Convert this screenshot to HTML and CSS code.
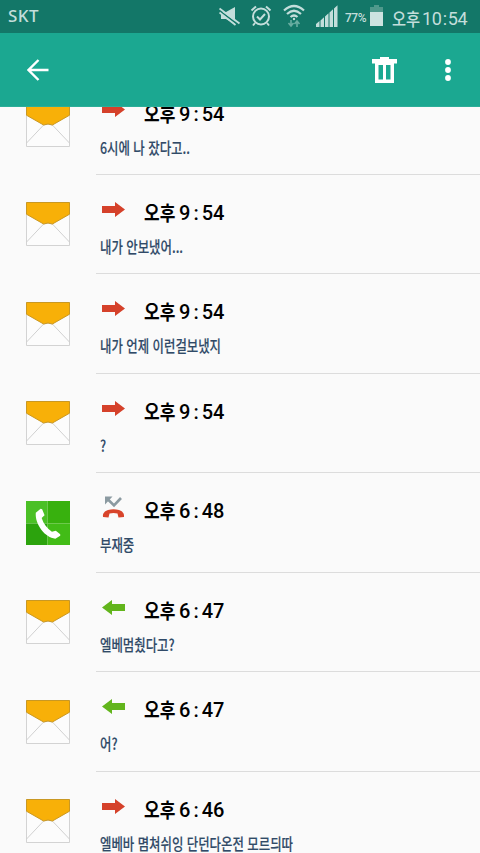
FILE: index.html
```
<!DOCTYPE html>
<html lang="ko">
<head>
<meta charset="UTF-8">
<title>통화 및 메시지 기록</title>
<link rel="stylesheet" href="styles.css">
</head>
<body>

<svg class="defs" width="0" height="0">
  <symbol id="mail" viewBox="0 0 45 45">
    <path d="M.5 .5h44v44H.5z" fill="#fcfcfc" stroke="#d2d2d2"/>
    <path d="M.5 41L18 22.500q4.500-2 9 0L44.500 41" fill="none" stroke="#cfcfcf"/>
    <path d="M.5 .5h44v12L27 22.500q-4.500-2-9 0L.5 12.500z" fill="#f8b008" stroke="#c99721"/>
  </symbol>
  <symbol id="call" viewBox="0 0 45 45">
    <path d="M0 0h22v23H0z" fill="#4bc026"/>
    <path d="M22 0h23v23H22z" fill="#38b10e"/>
    <path d="M0 23h22v22H0z" fill="#2ca30d"/>
    <path d="M22 23h23v22H22z" fill="#42bc17"/>
    <path d="M10 12l5-4 1.500 .5 2.500 6-3 3c2 6 5.500 10.500 10.500 14l4-1 4.500 3.500v1.500L30 38.500C19.500 37.500 9 24 10 12z" fill="#fff"/>
  </symbol>
  <symbol id="arrow" viewBox="0 0 23 15">
    <path d="M0 4h13V0l10 7.500-10 7.500v-4H0z" fill="currentColor"/>
  </symbol>
  <symbol id="missed" viewBox="0 0 23 22">
    <path d="M5 2.500l7 7L19 2" fill="none" stroke="#8b9aa1" stroke-width="2.600"/>
    <path d="M3 .5h7.500L3 8.500z" fill="#8b9aa1"/>
    <path d="M1 21c-.5-4 2-6 5-7 4-1 7-1 11 0 3 1 5.500 3 5 7l-5.500 .5-1-4c-3-.7-5-.7-8 0l-1 4z" fill="#d8442b"/>
  </symbol>
</svg>

<div class="status">
  <span class="carrier">SKT</span>
  <svg class="mute" width="22" height="20" viewBox="0 0 22 20">
    <path d="M2 5h5l9-5v17l-9-5H2z" fill="#c3dedb"/>
    <path d="M0 3.500l20 15" stroke="#137768" stroke-width="2"/>
    <path d="M.5 1.500l20 15M.5 5.500l16 12.500" stroke="#c3dedb" stroke-width="1.800"/>
  </svg>
  <svg class="alarm" width="22" height="22" viewBox="0 0 22 22" fill="none" stroke="#c3dedb" stroke-width="2">
    <circle cx="11" cy="11.500" r="8"/>
    <path d="M7 11.500l3 3 5-5.500M1.500 5.500l4.500-4M20.500 5.500L16 1.500M5 18l-2 2.500M17 18l2 2.500"/>
  </svg>
  <svg class="wifi" width="22" height="24" viewBox="0 0 22 24" fill="none" stroke="#c3dedb" stroke-width="2.200">
    <path d="M1 6.500q10-9 20 0M4 10q7-6.500 14 0M7.500 13q3.500-3 7 0"/>
    <circle cx="11" cy="15" r="1.200" fill="#c3dedb" stroke="none"/>
    <path d="M8 16v5.500M5.500 19L8 22l2.500-3M14 23v-6M11.500 20l2.500-3 2.500 3" stroke="#6aaea2" stroke-width="1.600"/>
  </svg>
  <svg class="signal" width="22" height="22" viewBox="0 0 22 22" fill="#c3dedb">
    <path d="M0 19l3.500-3v6H0zM4.500 15.500l3.500-3.200v9.700H4.500zM9 11.500l3.500-3.200v13.700H9zM13.500 7.500L17 4.300v17.700h-3.500zM18 3.500L21.500 .3v21.700H18z"/>
  </svg>
  <span class="percent">77%</span>
  <svg class="battery" width="14" height="22" viewBox="0 0 14 22">
    <path d="M4 0h5v2h4v6H0V2h4z" fill="#4f998c"/>
    <path d="M0 7h13v14H0z" fill="#cde3e0"/>
  </svg>
  <span class="clock"><span class="ampm">오후</span><span class="num">10<i>:</i>54</span></span>
</div>

<div class="appbar">
  <svg class="back" width="22" height="22" viewBox="0 0 22 22" fill="none" stroke="#fff" stroke-width="2.400">
    <path d="M21.500 11H2M11.500 1L1.500 11l10 10"/>
  </svg>
  <svg class="trash" width="26" height="27" viewBox="0 0 26 27" fill="#fff">
    <path d="M8 0h9v2h8v4.500H0V2h8z"/>
    <path fill-rule="evenodd" d="M3 6h19v20H3zM6.500 8v14.500H11V8zM14 8v14.500h4.500V8z"/>
  </svg>
  <svg class="more" width="6" height="22" viewBox="0 0 6 22" fill="#fff">
    <circle cx="3" cy="3" r="2.900"/>
    <circle cx="3" cy="11" r="2.900"/>
    <circle cx="3" cy="19" r="2.900"/>
  </svg>
</div>

<div class="list">
  <div class="row">
    <svg class="type"><use href="#mail"/></svg>
    <div class="info">
      <div class="top"><svg class="dir out"><use href="#arrow"/></svg><span class="ampm">오후</span><span class="num">9<i>:</i>54</span></div>
      <div class="msg">6시에 나 잤다고..</div>
    </div>
  </div>
  <div class="row">
    <svg class="type"><use href="#mail"/></svg>
    <div class="info">
      <div class="top"><svg class="dir out"><use href="#arrow"/></svg><span class="ampm">오후</span><span class="num">9<i>:</i>54</span></div>
      <div class="msg">내가 안보냈어...</div>
    </div>
  </div>
  <div class="row">
    <svg class="type"><use href="#mail"/></svg>
    <div class="info">
      <div class="top"><svg class="dir out"><use href="#arrow"/></svg><span class="ampm">오후</span><span class="num">9<i>:</i>54</span></div>
      <div class="msg">내가 언제 이런걸보냈지</div>
    </div>
  </div>
  <div class="row">
    <svg class="type"><use href="#mail"/></svg>
    <div class="info">
      <div class="top"><svg class="dir out"><use href="#arrow"/></svg><span class="ampm">오후</span><span class="num">9<i>:</i>54</span></div>
      <div class="msg">?</div>
    </div>
  </div>
  <div class="row">
    <svg class="type"><use href="#call"/></svg>
    <div class="info">
      <div class="top"><svg class="dir missed"><use href="#missed"/></svg><span class="ampm">오후</span><span class="num">6<i>:</i>48</span></div>
      <div class="msg">부재중</div>
    </div>
  </div>
  <div class="row">
    <svg class="type"><use href="#mail"/></svg>
    <div class="info">
      <div class="top"><svg class="dir in"><use href="#arrow"/></svg><span class="ampm">오후</span><span class="num">6<i>:</i>47</span></div>
      <div class="msg">엘베멈췄다고?</div>
    </div>
  </div>
  <div class="row">
    <svg class="type"><use href="#mail"/></svg>
    <div class="info">
      <div class="top"><svg class="dir in"><use href="#arrow"/></svg><span class="ampm">오후</span><span class="num">6<i>:</i>47</span></div>
      <div class="msg">어?</div>
    </div>
  </div>
  <div class="row">
    <svg class="type"><use href="#mail"/></svg>
    <div class="info">
      <div class="top"><svg class="dir out"><use href="#arrow"/></svg><span class="ampm">오후</span><span class="num">6<i>:</i>46</span></div>
      <div class="msg">엘베바 몀쳐쉬잉 단던다온전 모르듸따</div>
    </div>
  </div>
</div>

</body>
</html>
```
FILE: styles.css
```
* {
  box-sizing: border-box;
}

body {
  margin: 0;
  width: 480px;
  height: 853px;
  overflow: hidden;
  display: flex;
  flex-direction: column;
  background: #fafafa;
  font-family: Roboto, "Noto Sans CJK KR", sans-serif;
}

svg {
  display: block;
  flex: none;
}

.defs {
  position: absolute;
}

.ampm {
  width: 35px;
  font-family: "Noto Sans CJK KR", sans-serif;
  font-size: 20px;
  font-weight: 700;
  white-space: nowrap;
  transform: scaleX(.85);
  transform-origin: left;
}

.num i {
  font-style: normal;
  margin: 0 3px;
}

/* status bar */
.status {
  flex: none;
  height: 33px;
  display: flex;
  align-items: flex-start;
  background: #137768;
  color: #c3dedb;
  white-space: nowrap;
}

.carrier {
  width: 211px;
  padding-left: 8px;
  font: 500 17px/32px "Noto Sans", sans-serif;
  letter-spacing: .4px;
}

.mute { margin: 7px 0 0 8px; }
.alarm { margin: 5px 0 0 9px; }
.wifi { margin: 4px 0 0 11px; }
.signal { margin: 5px 0 0 11px; }

.percent {
  width: 24px;
  margin-left: 7px;
  font-size: 12px;
  font-weight: 500;
  letter-spacing: -.5px;
  line-height: 37px;
}

.battery { margin: 5px 0 0 1px; }

.clock {
  display: flex;
  margin-left: 8px;
  line-height: 38px;
}

.clock .ampm {
  width: 30px;
  font-size: 18px;
  font-weight: 500;
  line-height: 36px;
}

.clock .num {
  font-size: 18px;
  letter-spacing: -.3px;
}

.clock .num i {
  margin: 0 1px;
}

/* app bar */
.appbar {
  flex: none;
  height: 73.500px;
  padding-top: 2px;
  display: flex;
  align-items: center;
  background: #1ba891;
  border-bottom: 1px solid #2cae99;
}

.back { margin-left: 26.500px; }
.trash { margin-left: 323px; }
.more { margin-left: 47.500px; }

/* history list */
.list {
  flex: 1;
  min-height: 0;
  overflow: hidden;
}

.row {
  display: flex;
  height: 99.480px;
  padding-left: 26px;
}

.row:first-child {
  margin-top: -31px;
}

.type {
  width: 44px;
  height: 44px;
  margin-top: 27.400px;
}

.info {
  width: 384px;
  margin-left: 26px;
  padding-left: 4px;
  border-bottom: 1px solid #dcdcdc;
}

.top {
  display: flex;
  height: 34px;
  margin-top: 21px;
  color: #000;
  line-height: 34px;
}

.dir {
  width: 23px;
  height: 15px;
  margin: 5.800px 19px 0 2px;
}

.out { color: #d5412a; }

.in {
  color: #62b51c;
  transform: scaleX(-1);
}

.missed {
  height: 22px;
  margin-top: 2px;
}

.num {
  font-size: 20px;
  font-weight: 500;
  line-height: 35px;
}

.clock .num {
  font-weight: 400;
  line-height: 38px;
}

.msg {
  width: max-content;
  color: #304a68;
  font: 500 16px/32px "Noto Sans CJK KR", sans-serif;
  -webkit-text-stroke: .15px #304a68;
  transform: scaleX(.775);
  transform-origin: left;
}
```
